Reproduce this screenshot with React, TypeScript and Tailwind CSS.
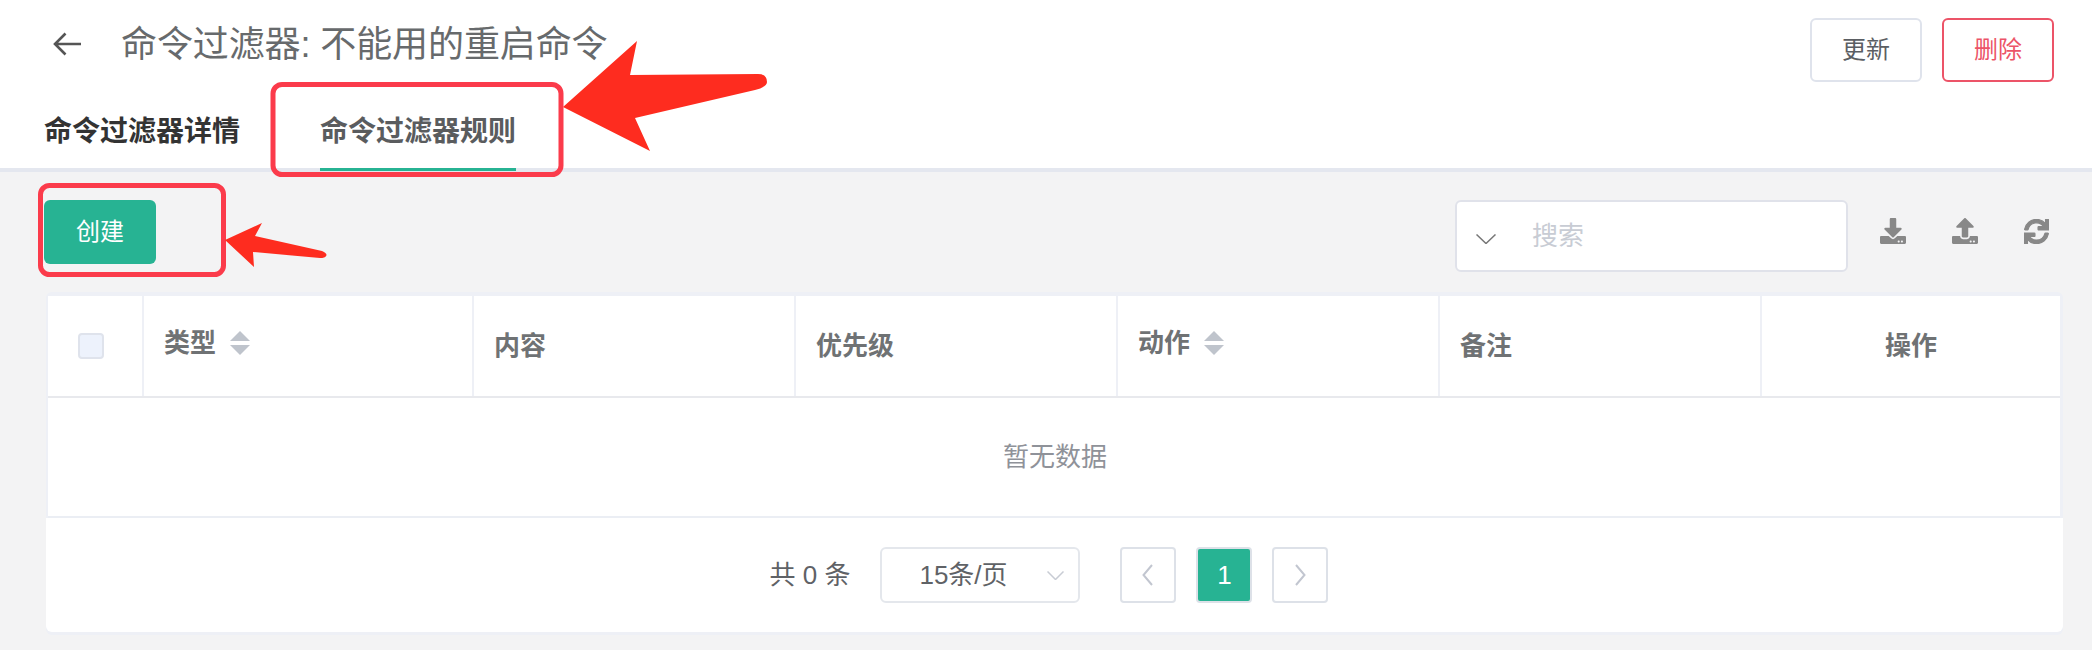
import { FaDownload, FaSync, FaUpload } from 'react-icons/fa';

const font = "font-['Liberation_Sans','Noto_Sans_CJK_SC',sans-serif]";

const columns = [
  { label: '类型', sortable: true },
  { label: '内容' },
  { label: '优先级' },
  { label: '动作', sortable: true },
  { label: '备注' },
];

function SortIcon() {
  return (
    <svg width="20" height="24" viewBox="0 0 20 24" className="ml-[14px] mt-[-1px] shrink-0" fill="#bfc4cc">
      <path d="M10 0 L20 10 H0 Z" />
      <path d="M0 14 H20 L10 24 Z" />
    </svg>
  );
}

function Annotations() {
  return (
    <svg className="pointer-events-none absolute left-0 top-0" width="2092" height="650" fill="none">
      <rect x="273" y="84.5" width="288" height="90" rx="9" stroke="#fb3b4b" strokeWidth="5" />
      <rect x="40.5" y="185.5" width="183" height="89" rx="9" stroke="#fb3b4b" strokeWidth="5" />
      <path
        d="M563 107 L637 41 L630 75 L758 74 Q767 74 767 82 Q767 87 755 90 L635 118 L650 151 Z"
        fill="#fe2c1f"
      />
      <path d="M225 240 L262 223 L255 236 L322 251 Q328 254 326 256 Q325 258 320 258 L253 252 L254 267 Z" fill="#fe2c1f" />
    </svg>
  );
}

export default function App() {
  return (
    <div className={`relative h-[650px] w-[2092px] overflow-hidden bg-[#f3f3f4] ${font}`}>
      <header className="h-[172px] border-b-4 border-[#e4e7ef] bg-white">
        <div className="flex items-start justify-between pl-[53px] pr-[38px] pt-[18px]">
          <div className="flex h-[52px] items-center">
            <svg width="28" height="24" viewBox="0 0 28 24" fill="none" stroke="#555" strokeWidth="2.6">
              <path d="M28 12 H2.5 M12.5 1.5 L2 12 L12.5 22.5" />
            </svg>
            <h1 className="ml-[40px] mt-[2px] text-[36px] font-normal leading-none tracking-[-0.1px] text-[#676a6c]">
              命令过滤器: 不能用的重启命令
            </h1>
          </div>
          <div className="flex gap-[20px]">
            <button className="h-[64px] w-[112px] rounded-[6px] border-2 border-[#dfe3ec] bg-white text-[24px] text-[#5b5e63]">
              更新
            </button>
            <button className="h-[64px] w-[112px] rounded-[6px] border-2 border-[#ec5468] bg-white text-[24px] text-[#ec5468]">
              删除
            </button>
          </div>
        </div>
        <div className="flex h-[86px] pl-[44px] text-[28px] font-bold">
          <div className="flex h-[86px] items-center pt-[14px] text-[#333]">命令过滤器详情</div>
          <div className="ml-[80px] flex h-[89px] items-center border-b-[3px] border-[#27b393] pt-[14px] text-[#5a5c5e]">
            命令过滤器规则
          </div>
        </div>
      </header>

      <div className="flex items-start pl-[44px] pr-[43px] pt-[28px]">
        <button className="h-[64px] w-[112px] rounded-[6px] bg-[#27b393] text-[24px] text-white">创建</button>
        <div className="ml-auto flex h-[72px] w-[393px] items-center rounded-[6px] border-2 border-[#e0e2ea] bg-white pl-[19px]">
          <svg width="20" height="10" viewBox="0 0 20 10" fill="none" stroke="#777" strokeWidth="1.5" className="mt-[5px]">
            <path d="M0.5 0.5 L10 9.5 L19.5 0.5" />
          </svg>
          <span className="ml-[36px] text-[26px] text-[#c8ccd4]">搜索</span>
        </div>
        <div className="ml-[32px] mt-[18px] flex items-center gap-[46px] text-[#888]">
          <FaDownload size={26} />
          <FaUpload size={26} />
          <FaSync size={25} stroke="currentColor" strokeWidth={24} />
        </div>
      </div>

      <div className="ml-[46px] mr-[29px] mt-[20px] rounded-[6px] bg-[#eef0f6] pb-[3px] pt-[4px]">
        <div className="ml-[2px] mr-[3px] bg-white">
          <div className="grid h-[102px] grid-cols-[96px_330px_322px_322px_322px_322px_1fr] border-b-2 border-[#e8e9ed] text-[26px] font-bold text-[#6f7274]">
            <div className="flex items-center justify-center border-r-2 border-[#eef0f6] pr-[8px]">
              <span className="h-[26px] w-[26px] rounded-[4px] border-2 border-[#dfe3ec] bg-[#edf2fc]" />
            </div>
            {columns.map((col) => (
              <div key={col.label} className="flex items-center border-r-2 border-[#eef0f6] pl-[20px]">
                <span className={col.sortable ? 'mb-[6px] flex items-center' : 'flex items-center'}>
                  {col.label}
                  {col.sortable ? <SortIcon /> : null}
                </span>
              </div>
            ))}
            <div className="flex items-center justify-center">操作</div>
          </div>
          <div className="flex h-[120px] items-center justify-center border-b-2 border-[#ebeef4] pl-[2px] text-[26px] text-[#8f9299]">
            暂无数据
          </div>
        </div>
        <div className="flex h-[114px] items-center justify-center rounded-b-[6px] bg-white pr-[11px] text-[26px] text-[#5f6266]">
          <span>共 0 条</span>
          <div className="ml-[30px] flex h-[56px] w-[200px] items-center rounded-[6px] border-2 border-[#e4e7ec] pl-[37px]">
            <span>15条/页</span>
            <svg width="17" height="9" viewBox="0 0 17 9" fill="none" stroke="#c8ccd4" strokeWidth="1.5" className="ml-[39px]">
              <path d="M0.5 0.5 L8.5 8.5 L16.5 0.5" />
            </svg>
          </div>
          <button className="ml-[40px] flex h-[56px] w-[56px] items-center justify-center rounded-[4px] border-2 border-[#dde1e8] bg-white pr-[2px]">
            <svg width="11" height="22" viewBox="0 0 11 22" fill="none" stroke="#c2c6d0" strokeWidth="2">
              <path d="M10 1 L1.5 11 L10 21" />
            </svg>
          </button>
          <button className="ml-[20px] flex h-[56px] w-[56px] items-center justify-center rounded-[4px] border-2 border-[#dde1e8] bg-[#27b393] text-white">
            1
          </button>
          <button className="ml-[20px] flex h-[56px] w-[56px] items-center justify-center rounded-[4px] border-2 border-[#dde1e8] bg-white">
            <svg width="11" height="22" viewBox="0 0 11 22" fill="none" stroke="#c2c6d0" strokeWidth="2">
              <path d="M1 1 L9.5 11 L1 21" />
            </svg>
          </button>
        </div>
      </div>

      <Annotations />
    </div>
  );
}
